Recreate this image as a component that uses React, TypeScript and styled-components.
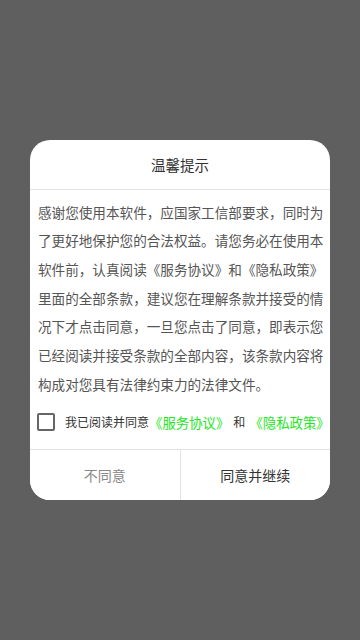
import React, { useState } from 'react';
import styled, { createGlobalStyle } from 'styled-components';

const GlobalStyle = createGlobalStyle`
  html, body {
    margin: 0;
    padding: 0;
    background: #5f5f5f;
    font-family: 'Noto Sans CJK SC', 'Noto Sans', sans-serif;
  }
`;

const Overlay = styled.div`
  min-height: 100vh;
  display: flex;
  align-items: center;
  justify-content: center;
`;

const Dialog = styled.div`
  width: 300px;
  height: 360px;
  background: #fff;
  border-radius: 20px;
  overflow: hidden;
  display: flex;
  flex-direction: column;
`;

const Header = styled.div`
  height: 49px;
  border-bottom: 1px solid #e3e3e3;
  display: flex;
  align-items: center;
  justify-content: center;
  font-size: 14.5px;
  color: #333;
`;

const Body = styled.div`
  padding: 8px 8px 0 8px;
  font-size: 13.6px;
  color: #555;
  height: 201px;
`;

const Line = styled.div<{ last?: boolean }>`
  height: 28.7px;
  line-height: 28.7px;
  white-space: nowrap;
  text-align: justify;
  text-align-last: ${({ last }) => (last ? 'left' : 'justify')};
  text-justify: inter-character;
`;

const AgreeRow = styled.label`
  height: 47px;
  padding: 0 0 4px 7px;
  display: flex;
  align-items: center;
  font-size: 12px;
  color: #333;
  white-space: nowrap;
`;

const CheckBox = styled.span<{ checked: boolean }>`
  width: 14px;
  height: 14px;
  border: 2px solid #666;
  border-radius: 2px;
  margin-right: 10px;
  flex-shrink: 0;
  background: ${({ checked }) => (checked ? '#666' : 'transparent')};
`;

const Link = styled.span`
  color: #22e622;
  font-size: 13.4px;
`;

const And = styled.span`
  margin: 0 4px;
`;

const Footer = styled.div`
  height: 50px;
  border-top: 1px solid #e3e3e3;
  display: flex;
`;

const Button = styled.button<{ primary?: boolean }>`
  flex: 1;
  border: none;
  background: #fff;
  font-family: inherit;
  font-size: 14px;
  color: ${({ primary }) => (primary ? '#333' : '#888')};
  padding: 0;
  &:first-child {
    border-right: 1px solid #e3e3e3;
  }
`;

const lines = [
  '感谢您使用本软件，应国家工信部要求，同时为',
  '了更好地保护您的合法权益。请您务必在使用本',
  '软件前，认真阅读《服务协议》和《隐私政策》',
  '里面的全部条款，建议您在理解条款并接受的情',
  '况下才点击同意，一旦您点击了同意，即表示您',
  '已经阅读并接受条款的全部内容，该条款内容将',
  '构成对您具有法律约束力的法律文件。',
];

export default function App() {
  const [checked, setChecked] = useState(false);
  return (
    <>
      <GlobalStyle />
      <Overlay>
        <Dialog>
          <Header>温馨提示</Header>
          <Body>
            {lines.map((l, i) => (
              <Line key={i} last={i === lines.length - 1}>
                {l}
              </Line>
            ))}
          </Body>
          <AgreeRow onClick={() => setChecked(!checked)}>
            <CheckBox checked={checked} />
            我已阅读并同意
            <Link>《服务协议》</Link>
            <And>和</And>
            <Link>《隐私政策》</Link>
          </AgreeRow>
          <Footer>
            <Button>不同意</Button>
            <Button primary>同意并继续</Button>
          </Footer>
        </Dialog>
      </Overlay>
    </>
  );
}
